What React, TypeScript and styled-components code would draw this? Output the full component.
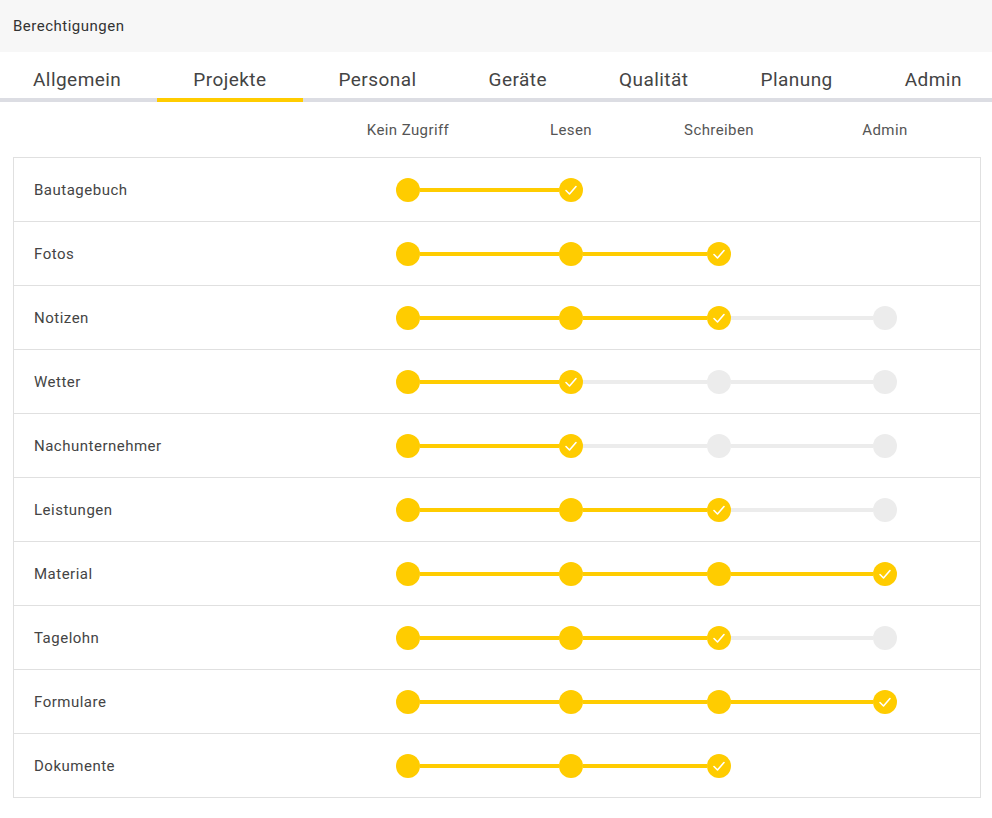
import React from 'react';
import styled, {createGlobalStyle} from "styled-components";

const GlobalStyle = createGlobalStyle`
  body {
    margin: 0;
    background: #fff;
    font-family: Roboto, "Liberation Sans", Arial, sans-serif;
    color: #444;
  }
`

const YELLOW = '#ffcc00'
const GREY = '#ececec'
const TAB_LINE = '#dcdde3'
// step columns: dot, line, dot, line, dot, line, dot
const TRACK = '24px 139px 24px 124px 24px 142px 24px'

const Page = styled.div`
  width: 992px;
  min-height: 818px;
`
const TitleBar = styled.header`
  height: 52px;
  background-color: #f7f7f7;
  display: flex;
  align-items: center;
  padding: 0 13px;
  font-size: 15px;
  letter-spacing: 0.5px;
  color: #333;
`
const TabBar = styled.nav`
  height: 50px;
  display: flex;
  overflow: hidden;
  background: linear-gradient(${TAB_LINE}, ${TAB_LINE}) bottom / 100% 4px no-repeat;
`
const TabList = styled.ul`
  display: flex;
  margin: 0 0 0 -3px;
  padding: 0;
  list-style: none;
`
const Tab = styled.li<{ $active?: boolean }>`
  box-sizing: border-box;
  height: 50px;
  padding: 8px 36px 0;
  display: flex;
  align-items: center;
  font-size: 19px;
  letter-spacing: 0.45px;
  color: #444;
  white-space: nowrap;
  cursor: pointer;
  border-bottom: 4px solid ${p => p.$active ? YELLOW : TAB_LINE};
`
const Content = styled.main`
  padding: 0 11px 0 13px;
`
const HeaderRow = styled.div`
  display: grid;
  grid-template-columns: 383px ${TRACK};
  height: 55px;
  align-items: center;
`
const HeaderLabel = styled.div`
  display: flex;
  justify-content: center;
  white-space: nowrap;
  font-size: 15px;
  letter-spacing: 0.4px;
  color: #555;
`
const Table = styled.ul`
  margin: 0;
  padding: 0;
  list-style: none;
  border: 1px solid #e0e0e0;
`
const Row = styled.li`
  display: grid;
  grid-template-columns: 382px ${TRACK};
  align-items: center;
  height: 63px;
  border-top: 1px solid #e0e0e0;

  &:first-child {
    border-top: none;
  }
`
const RowLabel = styled.span`
  padding-left: 20px;
  font-size: 15px;
  letter-spacing: 0.5px;
  color: #444;
`
const Dot = styled.div<{ $on: boolean }>`
  width: 24px;
  height: 24px;
  border-radius: 50%;
  background: ${p => p.$on ? YELLOW : GREY};
  display: flex;
  align-items: center;
  justify-content: center;
  cursor: pointer;
`
const Line = styled.div<{ $on: boolean }>`
  height: 4px;
  background: ${p => p.$on ? YELLOW : GREY};
`

const Check: React.FC = () => (
    <svg width="14" height="14" viewBox="0 0 14 14" fill="none">
        <polyline points="2,7.5 5.5,11 12,3.5" stroke="#fff" strokeWidth="1.6" strokeLinecap="round"
                  strokeLinejoin="round"/>
    </svg>
)

const tabs: string[] = ['Allgemein', 'Projekte', 'Personal', 'Geräte', 'Qualität', 'Planung', 'Admin']
const levels: string[] = ['Kein Zugriff', 'Lesen', 'Schreiben', 'Admin']

type Permission = { name: string; steps: number; value: number }

const permissions: Permission[] = [
    {name: 'Bautagebuch', steps: 2, value: 1},
    {name: 'Fotos', steps: 3, value: 2},
    {name: 'Notizen', steps: 4, value: 2},
    {name: 'Wetter', steps: 4, value: 1},
    {name: 'Nachunternehmer', steps: 4, value: 1},
    {name: 'Leistungen', steps: 4, value: 2},
    {name: 'Material', steps: 4, value: 3},
    {name: 'Tagelohn', steps: 4, value: 2},
    {name: 'Formulare', steps: 4, value: 3},
    {name: 'Dokumente', steps: 3, value: 2},
]

const Stepper: React.FC<{ steps: number; value: number }> = ({steps, value}) => {
    const cells: React.ReactNode[] = []
    for (let i = 0; i < steps; i++) {
        if (i > 0) cells.push(<Line key={'l' + i} $on={i <= value}/>)
        cells.push(
            <Dot key={'d' + i} $on={i <= value}>
                {i === value && <Check/>}
            </Dot>
        )
    }
    return <>{cells}</>
}

const App: React.FC = () => {
    return (
        <Page>
            <GlobalStyle/>
            <TitleBar>Berechtigungen</TitleBar>
            <TabBar>
                <TabList>
                    {tabs.map(t => (
                        <Tab key={t} $active={t === 'Projekte'}>{t}</Tab>
                    ))}
                </TabList>
            </TabBar>
            <Content>
                <HeaderRow>
                    <span/>
                    {levels.map((l, i) => (
                        <React.Fragment key={l}>
                            {i > 0 && <span/>}
                            <HeaderLabel>{l}</HeaderLabel>
                        </React.Fragment>
                    ))}
                </HeaderRow>
                <Table>
                    {permissions.map(p => (
                        <Row key={p.name}>
                            <RowLabel>{p.name}</RowLabel>
                            <Stepper steps={p.steps} value={p.value}/>
                        </Row>
                    ))}
                </Table>
            </Content>
        </Page>
    );
};
export default App;
